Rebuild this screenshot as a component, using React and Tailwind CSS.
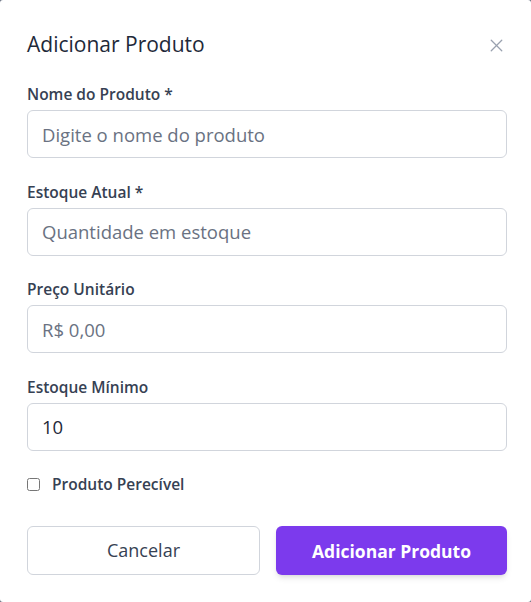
import React from "react";
import { X } from "lucide-react";

const fields = [
  { label: "Nome do Produto *", placeholder: "Digite o nome do produto" },
  { label: "Estoque Atual *", placeholder: "Quantidade em estoque" },
  { label: "Preço Unitário", placeholder: "R$ 0,00" },
  { label: "Estoque Mínimo", placeholder: "", value: "10" },
];

export default function App() {
  return (
    <div className="w-[531px] h-[602px] bg-gray-500" style={{ fontFamily: '"Open Sans", "Noto Sans", sans-serif' }}>
      <div className="w-full h-full bg-white rounded-[3px] pl-[27px] pr-[24px] pt-[30px]">
        <div className="flex items-center justify-between h-[30px]">
          <h2 className="text-[21px] font-medium text-gray-800">Adicionar Produto</h2>
          <button className="text-gray-400">
            <X size={21} strokeWidth={1.5} />
          </button>
        </div>
        <form className="mt-[24px] flex flex-col gap-[23.5px]">
          {fields.map((f) => (
            <div key={f.label} className="flex flex-col">
              <label className="text-[15.5px] leading-[20px] font-semibold text-gray-700 mb-[6px]">{f.label}</label>
              <input
                type="text"
                placeholder={f.placeholder}
                defaultValue={f.value}
                className="h-[48px] w-full rounded-md border border-gray-300 px-[14px] text-[18.5px] text-gray-800 placeholder:text-gray-500 outline-none"
              />
            </div>
          ))}
          <label className="flex items-center gap-[12px] mt-[-1px] text-[15.5px] font-semibold text-gray-700">
            <input type="checkbox" className="w-[13px] h-[13px]" />
            Produto Perecível
          </label>
        </form>
        <div className="mt-[30px] flex gap-[16px]">
          <button className="flex-1 h-[49px] rounded-md border border-gray-300 text-[18px] text-gray-700 bg-white">
            Cancelar
          </button>
          <button className="flex-1 h-[49px] rounded-md bg-[#7c3aed] text-white text-[17.5px] font-bold shadow-md">
            Adicionar Produto
          </button>
        </div>
      </div>
    </div>
  );
}
